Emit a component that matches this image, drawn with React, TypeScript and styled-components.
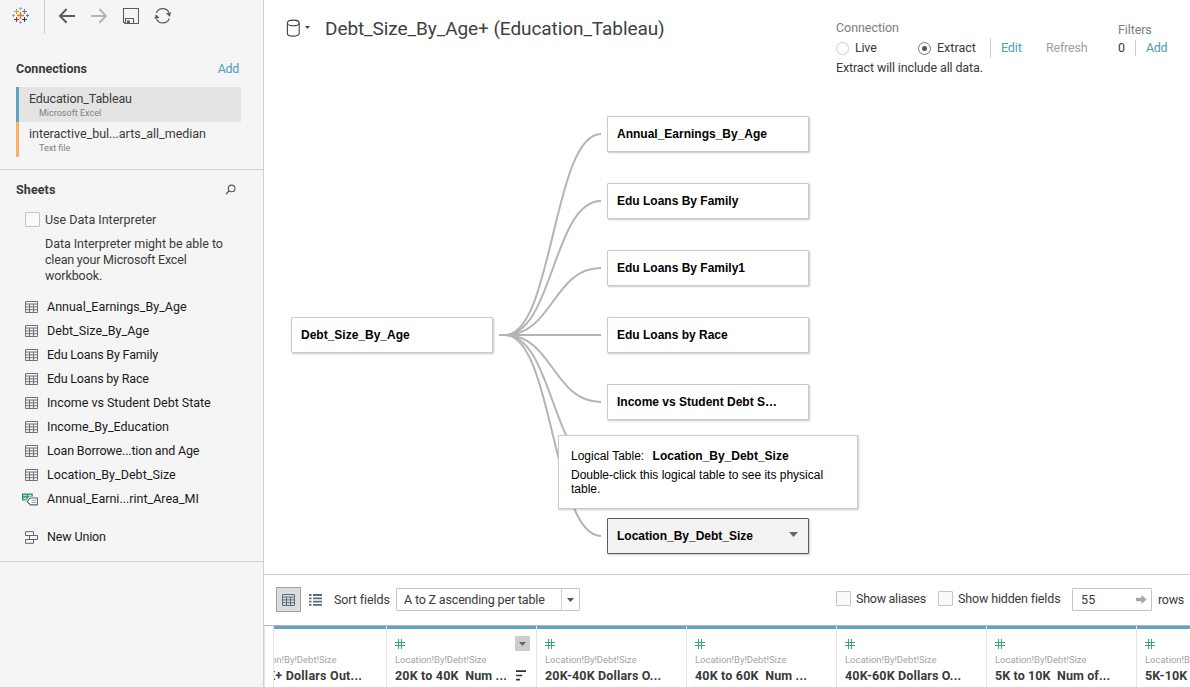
import React from "react";
import styled, { createGlobalStyle } from "styled-components";

const GlobalStyle = createGlobalStyle`
  *, *::before, *::after { box-sizing: border-box; }
  body {
    margin: 0;
    overflow: hidden;
    background: #fff;
    color: #333;
    font: 12.5px/16px Roboto, "Liberation Sans", sans-serif;
  }
  svg { display: block; flex: none; }
`;

const Text = styled.span<{ $ls?: number; $color?: string; $bold?: boolean }>`
  white-space: pre;
  letter-spacing: ${(p) => p.$ls ?? 0}px;
  color: ${(p) => p.$color ?? "#3a3a3a"};
  font-weight: ${(p) => (p.$bold ? 700 : 400)};
`;

const Link = styled(Text).attrs({ as: "a" })`
  color: #4e9dba;
`;

const Window = styled.div`
  display: grid;
  grid-template-columns: 264px 1fr;
  width: 1190px;
  height: 687px;
  overflow: hidden;
`;

/* ---------- sidebar ---------- */

const Sidebar = styled.aside`
  display: flex;
  flex-direction: column;
  background: #f5f5f5;
  border-right: 1px solid #d0d0d0;
`;

const Toolbar = styled.div`
  display: flex;
  height: 34px;
`;

const LogoCell = styled.div`
  width: 45px;
  height: 34px;
  padding: 7px 0 0 12px;
  border-right: 1px solid #cfcfcf;
`;

const ToolCell = styled.div<{ $left: number }>`
  padding-top: 7px;
  margin-left: ${(p) => p.$left}px;
`;

const Section = styled.section<{ $height: number }>`
  height: ${(p) => p.$height}px;
  border-bottom: 1px solid #d0d0d0;
`;

const SectionHead = styled.div<{ $top: number }>`
  display: flex;
  justify-content: space-between;
  align-items: center;
  height: 16px;
  margin: ${(p) => p.$top}px 24px 0 16px;
`;

const SearchSlot = styled.span`
  margin: -1px 3px 0 0;
`;

const ConnectionList = styled.div`
  margin: 10px 22px 0 16px;
`;

const ConnectionRow = styled.div<{ $bar: string; $active?: boolean }>`
  display: flex;
  flex-direction: column;
  height: 35px;
  padding: 4px 0 0 10px;
  border-left: 3px solid ${(p) => p.$bar};
  background: ${(p) => (p.$active ? "#e4e4e4" : "transparent")};
`;

const ConnectionKind = styled.span`
  margin-left: 10px;
  color: #808080;
  font-size: 9px;
  line-height: 12px;
`;

const CheckBox = styled.span`
  flex: none;
  width: 15px;
  height: 15px;
  border: 1px solid #c4c4c4;
  border-radius: 1px;
  background: #fafafa;
`;

const InterpreterRow = styled.div`
  display: flex;
  align-items: flex-start;
  gap: 5px;
  height: 17px;
  margin: 14px 0 0 25px;
`;

const InterpreterNote = styled.div`
  display: flex;
  flex-direction: column;
  margin: 7px 0 11px 45px;
`;

const SheetRow = styled.div<{ $gap?: number }>`
  display: flex;
  align-items: center;
  height: 24px;
  margin-top: ${(p) => p.$gap ?? 0}px;
`;

const SheetIcon = styled.span`
  display: flex;
  justify-content: flex-end;
  width: 38px;
  margin-right: 9px;
`;

/* ---------- main header ---------- */

const Main = styled.main`
  display: flex;
  flex-direction: column;
  min-width: 0;
`;

const Header = styled.header`
  display: flex;
  height: 78px;
`;

const TitleBar = styled.div`
  display: flex;
  align-items: center;
  width: 572px;
  height: 56px;
  padding-left: 22px;
`;

const TitleCaret = styled.span`
  margin: -1px 0 0 5px;
`;

const Title = styled.h1`
  margin: 2px 0 0 15px;
  color: #404040;
  font-size: 19px;
  font-weight: 400;
  line-height: 24px;
  letter-spacing: -0.08px;
  white-space: pre;
`;

const ConnectionInfo = styled.div`
  width: 282px;
  padding-top: 18px;
`;

const FilterInfo = styled.div`
  padding-top: 20px;
`;

const InfoLine = styled.div<{ $h?: number }>`
  display: flex;
  align-items: center;
  height: ${(p) => p.$h ?? 20}px;
`;

const Radio = styled.span<{ $on?: boolean }>`
  display: grid;
  place-items: center;
  width: 13px;
  height: 13px;
  margin-right: 6px;
  border: 1px solid ${(p) => (p.$on ? "#777" : "#ccc")};
  border-radius: 50%;
  background: #fff;
  &::after {
    content: "";
    width: 5px;
    height: 5px;
    border-radius: 50%;
    background: ${(p) => (p.$on ? "#555" : "transparent")};
  }
`;

const Option = styled.span<{ $width: number }>`
  display: flex;
  align-items: center;
  width: ${(p) => p.$width}px;
`;

const Divider = styled.span<{ $h: number; $right: number }>`
  width: 1px;
  height: ${(p) => p.$h}px;
  margin-right: ${(p) => p.$right}px;
  background: #ccc;
`;

/* ---------- relationship canvas ---------- */

const Canvas = styled.div`
  position: relative;
  height: 496px;
  overflow: hidden;
  font-family: "Liberation Sans", Arial, sans-serif;
`;

const Wires = styled.svg`
  position: absolute;
  inset: 0;
`;

const Node = styled.div<{ $x: number; $y: number; $selected?: boolean }>`
  position: absolute;
  left: ${(p) => p.$x}px;
  top: ${(p) => p.$y}px;
  display: flex;
  align-items: center;
  justify-content: space-between;
  width: 202px;
  height: 36px;
  padding: 0 10px 0 9px;
  border: 1px solid ${(p) => (p.$selected ? "#5c5c5c" : "#cacaca")};
  border-radius: 1px;
  background: ${(p) => (p.$selected ? "#f3f3f3" : "#fff")};
  box-shadow: 1px 1px 2px rgba(0, 0, 0, 0.22);
  color: #000;
  font-size: 12px;
  font-weight: 700;
  white-space: pre;
`;

const NodeCaret = styled.span`
  margin-top: -3px;
`;

const Tooltip = styled.div`
  position: absolute;
  left: 294px;
  top: 357px;
  width: 300px;
  height: 74px;
  padding: 13px 20px 0 12px;
  border: 1px solid #cacaca;
  background: #fff;
  box-shadow: 1px 1px 2px rgba(0, 0, 0, 0.2);
  color: #000;
  font-size: 12px;
  line-height: 14px;
`;

const TooltipHead = styled.div`
  margin-bottom: 5px;
  b { margin-left: 8.4px; }
`;

/* ---------- field grid ---------- */

const GridBar = styled.div`
  display: flex;
  align-items: center;
  height: 52px;
  padding-left: 12px;
  border-top: 1px solid #d0d0d0;
  border-bottom: 1px solid #b4b4b4;
`;

const ViewButton = styled.span`
  display: grid;
  place-items: center;
  width: 25px;
  height: 25px;
  margin: -1px 8px 0 0;
  border: 1px solid #a0a0a0;
  background: #dcdcdc;
`;

const SortLabel = styled.span`
  width: 55px;
  margin-left: 12px;
`;

const Select = styled.span`
  display: flex;
  align-items: center;
  width: 184px;
  height: 23px;
  margin: -1px 0 0 7px;
  padding-left: 7px;
  border: 1px solid #c4c4c4;
  border-radius: 1px;
`;

const SelectArrow = styled.span`
  display: grid;
  place-items: center;
  width: 18px;
  height: 21px;
  margin-left: auto;
  border-left: 1px solid #d4d4d4;
`;

const CheckField = styled.span<{ $width: number }>`
  display: flex;
  align-items: flex-start;
  gap: 5px;
  width: ${(p) => p.$width}px;
  margin-top: -2px;
`;

const RowCount = styled.span`
  display: flex;
  align-items: center;
  justify-content: space-between;
  width: 80px;
  height: 23px;
  margin-right: 6px;
  margin-top: -1px;
  padding: 0 4px 0 8px;
  border: 1px solid #c4c4c4;
  border-radius: 1px;
`;

const RowsLabel = styled.span`
  width: 32px;
`;

const Spacer = styled.span`
  flex: 1;
`;

const FieldGrid = styled.div`
  display: flex;
  flex: 1;
  min-height: 0;
  overflow: hidden;
`;

const Gutter = styled.div`
  flex: none;
  width: 10px;
  border: solid #e6e6e6;
  border-width: 0 1px;
`;

const Columns = styled.div`
  display: flex;
  flex: 1;
  min-width: 0;
  overflow: hidden;
`;

const Column = styled.div<{ $shift?: number }>`
  flex: none;
  display: flex;
  flex-direction: column;
  width: 150px;
  margin-left: -${(p) => p.$shift ?? 0}px;
  border-right: 1px solid #e6e6e6;
  &::before {
    content: "";
    height: 3px;
    background: #5fa3c5;
  }
`;

const ColumnTop = styled.div`
  display: flex;
  align-items: center;
  justify-content: space-between;
  height: 15px;
  margin: 7px 6px 3px 8px;
`;

const MenuButton = styled.span`
  display: grid;
  place-items: center;
  width: 15px;
  height: 15px;
  background: #cdcdcd;
`;

const ColumnSource = styled.div`
  padding-left: 8px;
  color: #a3a3a3;
  font-size: 9.5px;
  line-height: 12px;
  letter-spacing: -0.02px;
  white-space: pre;
`;

const ColumnName = styled.div`
  display: flex;
  align-items: center;
  justify-content: space-between;
  height: 18px;
  padding: 1px 10px 0 8px;
`;

/* ---------- icons ---------- */

const plus = (x: number, y: number, r: number) =>
  `M${x - r} ${y}H${x + r}M${x} ${y - r}V${y + r}`;

const Logo = () => (
  <svg width="17" height="18" fill="none" strokeWidth="1.2">
    <path d={plus(8.5, 8.5, 3.5)} stroke="#e8762c" strokeWidth="1.3" />
    <path d={plus(4.5, 4.5, 2.5)} stroke="#eb9129" strokeWidth="1.1" />
    <path d={plus(12.5, 4.5, 2.5)} stroke="#59879b" strokeWidth="1.1" />
    <path d={plus(4.5, 12.5, 2.5)} stroke="#c72035" strokeWidth="1.1" />
    <path d={plus(12.5, 12.5, 2.5)} stroke="#1f457e" strokeWidth="1.1" />
    <path d={plus(8.5, 1.5, 1.5)} stroke="#8fb3be" strokeWidth="1" />
    <path d={plus(1.5, 8.5, 1.5)} stroke="#7fabbf" strokeWidth="1" />
    <path d={plus(15.5, 8.5, 1.5)} stroke="#6b749c" strokeWidth="1" />
    <path d={plus(8.5, 15.5, 1.5)} stroke="#9a9ebd" strokeWidth="1" />
  </svg>
);

const Back = () => (
  <svg width="18" height="18" fill="none" stroke="#5c5c5c" strokeWidth="2">
    <path d="M8.6 2 2 8.9 8.6 15.8M2 8.9H17" />
  </svg>
);

const Forward = () => (
  <svg width="18" height="18" fill="none" stroke="#b5b5b5" strokeWidth="2">
    <path d="M9.4 2 16 8.9 9.4 15.8M16 8.9H1" />
  </svg>
);

const Save = () => (
  <svg width="17" height="18" fill="none" stroke="#5c5c5c">
    <path d="M1.5 1.5H16.5V16.5H3L1.5 15ZM3.5 16V11.5H11.5V16" strokeWidth="1.1" />
    <path d="M5 13.5H8V16H5Z" fill="#5c5c5c" stroke="none" />
  </svg>
);

const Sync = () => (
  <svg width="18" height="18" fill="none" stroke="#5c5c5c" strokeWidth="1.2">
    <path d="M2.4 6A6.9 6.9 0 0 1 15 5.5M15.2 11.5A6.9 6.9 0 0 1 2.5 12" />
    <path d="M12 6.3 17.1 5.2 15.8 10ZM5.6 10.8 .5 12 1.8 7.2Z" fill="#5c5c5c" stroke="none" />
  </svg>
);

const Search = () => (
  <svg width="11" height="11" fill="none" stroke="#555" strokeWidth="1.1">
    <circle cx="6.6" cy="4.4" r="3.3" />
    <path d="M4.2 6.8.9 10.1" strokeWidth="1.3" />
  </svg>
);

const TableIcon = ({ color = "#707070" }: { color?: string }) => (
  <svg width="13" height="12" fill="none" stroke={color}>
    <path d="M.5.5H12.5V11.5H.5ZM.5 3H12.5M.5 5.9H12.5M.5 8.7H12.5M4.5 3V11.5M8.5 3V11.5" />
  </svg>
);

const TaggedTable = () => (
  <svg width="16" height="13" viewBox="0.6 0 16 13" fill="none">
    <path d="M1.2 1.2H10.8V7H1.2ZM1.2 3.9H10.8M6 1.2V7" fill="#b5e6cb" stroke="#21915c" strokeWidth="1.2" />
    <path d="M8.7 4.8H16V12H8.7L5.6 8.4Z" fill="#f5f5f5" stroke="#f5f5f5" strokeWidth="2.6" />
    <path d="M8.9 5H16V11.9H8.9L5.8 8.4Z" fill="#fff" stroke="#56677d" strokeWidth="1.1" />
    <path d="M10 7.4H14.5M10 9.5H14.5" stroke="#98a5b5" />
  </svg>
);

const UnionIcon = () => (
  <svg width="13" height="13" fill="none" stroke="#666">
    <path d="M.5.7H8.5V4.5H.5ZM4.5 4.5H12.5V8.5H4.5ZM.5 8.5H8.5V12.3H.5Z" />
  </svg>
);

const Cylinder = () => (
  <svg width="14" height="19" fill="none" stroke="#444" strokeWidth="1.1">
    <ellipse cx="7.3" cy="3.9" rx="5.9" ry="2.8" />
    <path d="M1.4 4V14.4C1.4 18 13.2 18 13.2 14.4V4" />
  </svg>
);

const Caret = ({ w = 7, h = 4, color = "#555" }: { w?: number; h?: number; color?: string }) => (
  <svg width={w} height={h}>
    <path d={`M0 0H${w}L${w / 2} ${h}Z`} fill={color} />
  </svg>
);

const ListIcon = () => (
  <svg width="13" height="12" stroke="#5b6b7d" strokeWidth="1.8">
    <path d="M0 1H2.5M4 1H13M0 4.3H2.5M4 4.3H13M0 7.6H2.5M4 7.6H13M0 10.9H2.5M4 10.9H13" />
  </svg>
);

const Hash = () => (
  <svg width="10" height="10" stroke="#3aa37c" strokeWidth="1.1">
    <path d="M3.5 0V10M6.5 0V10M0 3.5H10M0 6.5H10" />
  </svg>
);

const SortBars = () => (
  <svg width="10" height="11" stroke="#333" strokeWidth="1.7">
    <path d="M0 1.2H10M0 5.5H6.2M0 9.7H4" />
  </svg>
);

const GoArrow = () => (
  <svg width="11" height="9" fill="#a6a6a6">
    <path d="M0 2.7H5.5V0L10.6 4.5 5.5 9V6.3H0Z" />
  </svg>
);

/* ---------- data ---------- */

const sheets: [string, number][] = [
  ["Annual_Earnings_By_Age", 0],
  ["Debt_Size_By_Age", 0.03],
  ["Edu Loans By Family", -0.18],
  ["Edu Loans by Race", -0.18],
  ["Income vs Student Debt State", -0.03],
  ["Income_By_Education", 0],
  ["Loan Borrowe...tion and Age", -0.17],
  ["Location_By_Debt_Size", 0.03],
];

const tables: [string, number][] = [
  ["Annual_Earnings_By_Age", 38],
  ["Edu Loans By Family", 105],
  ["Edu Loans By Family1", 172],
  ["Edu Loans by Race", 239],
  ["Income vs Student Debt S…", 306],
];

const wireEnds = [56, 123, 190, 257, 324, 391, 458];

const fields: [string, number][] = [
  ["100K+ Dollars Out...", 0.22],
  ["20K to 40K\u00a0 Num ...", 0.17],
  ["20K-40K Dollars O...", 0.15],
  ["40K to 60K\u00a0 Num ...", 0.17],
  ["40K-60K Dollars O...", 0.15],
  ["5K to 10K\u00a0 Num of...", 0.1],
  ["5K-10K Dollars Ou...", 0.15],
];

export default function App() {
  return (
    <>
      <GlobalStyle />
      <Window>
        <Sidebar>
          <Toolbar>
            <LogoCell><Logo /></LogoCell>
            <ToolCell $left={13}><Back /></ToolCell>
            <ToolCell $left={14}><Forward /></ToolCell>
            <ToolCell $left={14}><Save /></ToolCell>
            <ToolCell $left={15}><Sync /></ToolCell>
          </Toolbar>
          <Section $height={136}>
            <SectionHead $top={27}>
              <Text $bold $ls={0.05}>Connections</Text>
              <Link $ls={-0.3}>Add</Link>
            </SectionHead>
            <ConnectionList>
              <ConnectionRow $bar="#5fa3c5" $active>
                <Text $ls={-0.13}>Education_Tableau</Text>
                <ConnectionKind>Microsoft Excel</ConnectionKind>
              </ConnectionRow>
              <ConnectionRow $bar="#fbb067">
                <Text $ls={-0.02}>interactive_bul...arts_all_median</Text>
                <ConnectionKind>Text file</ConnectionKind>
              </ConnectionRow>
            </ConnectionList>
          </Section>
          <Section $height={392}>
            <SectionHead $top={12}>
              <Text $bold $ls={0.1}>Sheets</Text>
              <SearchSlot><Search /></SearchSlot>
            </SectionHead>
            <InterpreterRow>
              <CheckBox />
              <Text>Use Data Interpreter</Text>
            </InterpreterRow>
            <InterpreterNote>
              <Text $ls={-0.05}>Data Interpreter might be able to</Text>
              <Text $ls={-0.19}>clean your Microsoft Excel</Text>
              <Text $ls={-0.1}>workbook.</Text>
            </InterpreterNote>
            {sheets.map(([name, ls]) => (
              <SheetRow key={name}>
                <SheetIcon><TableIcon /></SheetIcon>
                <Text $ls={ls} $color="#1a1a1a">{name}</Text>
              </SheetRow>
            ))}
            <SheetRow>
              <SheetIcon><TaggedTable /></SheetIcon>
              <Text $color="#1a1a1a">Annual_Earni...rint_Area_MI</Text>
            </SheetRow>
            <SheetRow $gap={14}>
              <SheetIcon><UnionIcon /></SheetIcon>
              <Text $ls={-0.14} $color="#1a1a1a">New Union</Text>
            </SheetRow>
          </Section>
        </Sidebar>

        <Main>
          <Header>
            <TitleBar>
              <Cylinder />
              <TitleCaret><Caret w={5} h={3} color="#444" /></TitleCaret>
              <Title>Debt_Size_By_Age+ (Education_Tableau)</Title>
            </TitleBar>
            <ConnectionInfo>
              <InfoLine><Text $color="#7d7d7d" $ls={-0.05}>Connection</Text></InfoLine>
              <InfoLine>
                <Option $width={82}><Radio /><Text $ls={-0.2}>Live</Text></Option>
                <Option $width={72}><Radio $on /><Text>Extract</Text></Option>
                <Divider $h={20} $right={10} />
                <Option $width={45}><Link $ls={-0.15}>Edit</Link></Option>
                <Text $color="#a0a0a0" $ls={-0.2}>Refresh</Text>
              </InfoLine>
              <InfoLine><Text $ls={-0.13}>Extract will include all data.</Text></InfoLine>
            </ConnectionInfo>
            <FilterInfo>
              <InfoLine><Text $color="#7d7d7d" $ls={-0.1}>Filters</Text></InfoLine>
              <InfoLine $h={16}>
                <Option $width={17}><Text>0</Text></Option>
                <Divider $h={16} $right={10} />
                <Link $ls={-0.3}>Add</Link>
              </InfoLine>
            </FilterInfo>
          </Header>

          <Canvas>
            <Wires width="926" height="496" fill="none" stroke="#b4b4b4" strokeWidth="2">
              {wireEnds.map((y) => (
                <path key={y} d={`M235 257H241C289 257 289 ${y} 337 ${y}`} />
              ))}
            </Wires>
            <Node $x={27} $y={239}>Debt_Size_By_Age</Node>
            {tables.map(([name, y]) => (
              <Node key={name} $x={343} $y={y}>{name}</Node>
            ))}
            <Node $x={343} $y={440} $selected>
              Location_By_Debt_Size
              <NodeCaret><Caret w={9} h={5} color="#666" /></NodeCaret>
            </Node>
            <Tooltip>
              <TooltipHead>Logical Table:<b>Location_By_Debt_Size</b></TooltipHead>
              Double-click this logical table to see its physical table.
            </Tooltip>
          </Canvas>

          <GridBar>
            <ViewButton><TableIcon color="#5b6b7d" /></ViewButton>
            <ListIcon />
            <SortLabel><Text $ls={-0.1}>Sort fields</Text></SortLabel>
            <Select>
              <Text $ls={-0.17}>A to Z ascending per table</Text>
              <SelectArrow><Caret /></SelectArrow>
            </Select>
            <Spacer />
            <CheckField $width={102}><CheckBox /><Text $ls={-0.27}>Show aliases</Text></CheckField>
            <CheckField $width={134}><CheckBox /><Text $ls={-0.15}>Show hidden fields</Text></CheckField>
            <RowCount><Text $ls={0.2}>55</Text><GoArrow /></RowCount>
            <RowsLabel><Text $ls={-0.3}>rows</Text></RowsLabel>
          </GridBar>

          <FieldGrid>
            <Gutter />
            <Columns>
              {fields.map(([name, ls], i) => (
                <Column key={name} $shift={i === 0 ? 37 : 0}>
                  <ColumnTop>
                    {i > 0 && <Hash />}
                    {i === 1 && <MenuButton><Caret color="#5b6b7d" /></MenuButton>}
                  </ColumnTop>
                  <ColumnSource>Location!By!Debt!Size</ColumnSource>
                  <ColumnName>
                    <Text $bold $ls={ls}>{name}</Text>
                    {i === 1 && <SortBars />}
                  </ColumnName>
                </Column>
              ))}
            </Columns>
          </FieldGrid>
        </Main>
      </Window>
    </>
  );
}
